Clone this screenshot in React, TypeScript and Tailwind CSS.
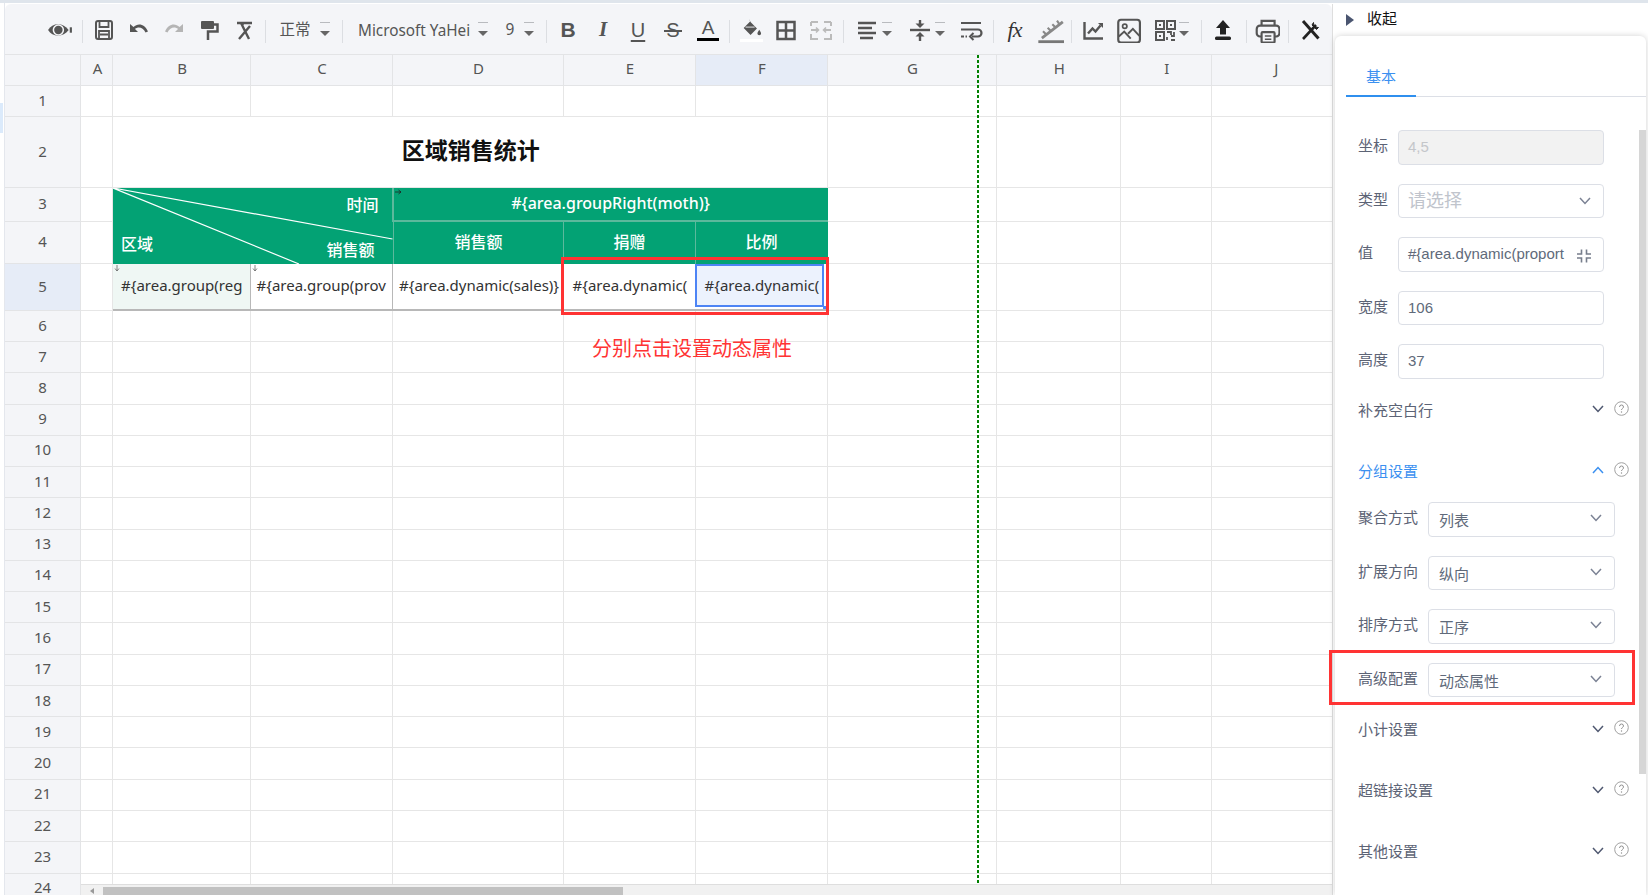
import React from "react";

const colTemplate = "grid-cols-[76px_32px_137.5px_142px_171px_132px_132px_169px_124.5px_90.5px_128.5px]";
const rowTemplate = "grid-rows-[31px_31px_71px_34px_42px_47px_31px_repeat(18,31.27px)]";
const colNames = ["A", "B", "C", "D", "E", "F", "G", "H", "I", "J"];

// generic wrapper for the toolbar drawings
const Ico = ({ children, w = 24, h = 24, box = "0 0 24 24" }: { children: React.ReactNode; w?: number; h?: number; box?: string }) => (
  <svg width={w} height={h} viewBox={box} fill="none">
    {children}
  </svg>
);

const Slot = ({ children, className = "w-[35px]" }: { children: React.ReactNode; className?: string }) => (
  <div className={`${className} shrink-0 flex items-center justify-center`}>{children}</div>
);

const Divider = ({ className = "w-[9px]" }: { className?: string }) => (
  <div className={`${className} shrink-0 flex justify-center mt-[4px]`}>
    <div className="w-px h-[23px] bg-[#dcdee2]" />
  </div>
);

const Caret = ({ className = "" }: { className?: string }) => (
  <div className={`${className} w-[10px] h-[14px] shrink-0 flex flex-col items-center justify-between mt-[-1px]`}>
    <div className="w-[10px] h-px bg-[#b9bbbf]" />
    <div className="w-0 h-0 border-x-[5px] border-x-transparent border-t-[5px] border-t-[#666]" />
  </div>
);

const Toolbar = () => (
  <div className="h-[51px] shrink-0 flex items-center pl-[37.5px] pt-px bg-[#f4f5f8] border-b border-[#e3e4e6] rounded-t-md text-[#555] font-['Noto_Sans','Noto_Sans_CJK_SC',sans-serif]">
    <Slot>
      <Ico w={26} h={26}>
        <path d="M1 12C5 5 15 5 20 12C15 19 5 19 1 12Z" fill="#555" />
        <circle cx="10.5" cy="12" r="4.6" fill="#555" stroke="#f4f5f8" strokeWidth="1.4" />
        <path d="M22 9.5v5" stroke="#555" strokeWidth="2" />
      </Ico>
    </Slot>
    <Divider />
    <Slot>
      <Ico>
        <rect x="4" y="3" width="16" height="18" rx="2" stroke="#555" strokeWidth="2" />
        <path d="M7.5 3.5v5.5h9v-5.5M7 20.5v-7.5h10v7.5M8 16.5h8" stroke="#555" strokeWidth="1.8" />
      </Ico>
    </Slot>
    <Slot>
      <Ico>
        <path d="M3 6v8h8l-3-3c3-2.6 8-2 10.5 3.5l2.5-1C18 6 11 4.5 6.5 9Z" fill="#555" />
      </Ico>
    </Slot>
    <Slot>
      <Ico>
        <path d="M21 6v8h-8l3-3c-3-2.6-8-2-10.5 3.5L3 13.5C6 6 13 4.5 17.5 9Z" fill="#b5b5b5" />
      </Ico>
    </Slot>
    <Slot>
      <Ico>
        <rect x="4" y="3" width="13" height="8" rx="1" fill="#555" />
        <path d="M17 6.5h3.5v7H11V22" stroke="#555" strokeWidth="2.5" />
      </Ico>
    </Slot>
    <Slot>
      <Ico>
        <path d="M5 5h15M11 5l-1 3M9 5l8 16M18 8L7 21" stroke="#555" strokeWidth="2.4" />
      </Ico>
    </Slot>
    <Divider className="w-[8px]" />
    <div className="w-[69px] shrink-0 flex items-center pl-[10px] text-[15.5px]">
      <span className="w-[30px] whitespace-nowrap">正常</span>
      <Caret className="ml-[10px]" />
    </div>
    <Divider className="w-[8px]" />
    <div className="w-[196px] shrink-0 flex items-center pl-[11px] text-[15.5px]">
      <span className="w-[112px] text-[17px] whitespace-nowrap scale-x-[0.9] origin-left">Microsoft YaHei</span>
      <Caret className="ml-[8px]" />
      <span className="ml-[18px] w-[9px]">9</span>
      <Caret className="ml-[9px]" />
    </div>
    <Divider className="w-[8px]" />
    <Slot>
      <span className="text-[21px] font-bold font-['Liberation_Sans',sans-serif]">B</span>
    </Slot>
    <Slot>
      <span className="text-[21px] font-bold italic font-['Liberation_Serif',serif]">I</span>
    </Slot>
    <Slot>
      <span className="text-[20px] underline underline-offset-[3px] decoration-2 font-['Liberation_Sans',sans-serif]">U</span>
    </Slot>
    <Slot>
      <div className="relative flex items-center justify-center w-[20px]">
        <span className="text-[20px] leading-[24px] font-['Liberation_Sans',sans-serif]">S</span>
        <div className="absolute left-[1px] right-[1px] top-[12px] h-[2px] bg-[#555]" />
      </div>
    </Slot>
    <Slot>
      <div className="flex flex-col items-center">
        <span className="text-[19px] leading-[20px] font-['Liberation_Sans',sans-serif]">A</span>
        <div className="w-[22px] h-[3px] bg-black" />
      </div>
    </Slot>
    <Divider className="w-[8px]" />
    <Slot>
      <div className="flex flex-col items-center">
        <Ico w={24} h={22}>
          <path d="M10 2l1.5 3.5 7 7-7 7-7.5-7.5L11 5" fill="#555" />
          <path d="M6 11h10" stroke="#f4f5f8" strokeWidth="1" />
          <path d="M21 14c1.3 2 2 3 2 4a2 2 0 01-4 0c0-1 .7-2 2-4Z" fill="#555" />
        </Ico>
        <div className="w-[23px] h-[3px] bg-white" />
      </div>
    </Slot>
    <Slot>
      <Ico>
        <rect x="3.5" y="4" width="17" height="17" stroke="#555" strokeWidth="2.5" />
        <path d="M12 4v17M3.5 12.5h17" stroke="#555" strokeWidth="2.5" />
      </Ico>
    </Slot>
    <Slot>
      <Ico>
        <path d="M2 4h7M15 4h7M2 4v4M22 4v4M2 16v5h7M22 16v5h-7M2 12h7M22 12h-7" stroke="#bbb" strokeWidth="2" />
        <path d="M7 9.5l2.5 2.5L7 14.5M17 9.5L14.5 12l2.5 2.5" stroke="#bbb" strokeWidth="1.6" />
      </Ico>
    </Slot>
    <Divider className="w-[9px]" />
    <Slot className="w-[24px] ml-[7px]">
      <Ico>
        <path d="M3 5h18M3 10h14M3 15h18M5 20h13" stroke="#555" strokeWidth="2.4" />
      </Ico>
    </Slot>
    <Caret className="ml-[3px]" />
    <Slot className="w-[24px] ml-[16px]">
      <Ico>
        <path d="M2 12h20" stroke="#555" strokeWidth="2.4" />
        <path d="M12 2v4" stroke="#555" strokeWidth="2.4" />
        <path d="M7.5 5.5h9L12 10Z" fill="#555" />
        <path d="M12 18v5" stroke="#555" strokeWidth="2.4" />
        <path d="M7.5 18.5h9L12 14Z" fill="#555" />
      </Ico>
    </Slot>
    <Caret className="ml-[3.5px]" />
    <Slot className="w-[30px] ml-[10.5px]">
      <Ico>
        <path d="M2 5h20M2 11.5h17a3 3 0 010 7h-6" stroke="#555" strokeWidth="2.2" />
        <path d="M14.5 15l-3.5 3.5 3.5 3.5" stroke="#555" strokeWidth="2" />
        <path d="M2 18.5h6" stroke="#555" strokeWidth="2.2" strokeDasharray="3 1.5" />
      </Ico>
    </Slot>
    <Divider className="w-[8px] ml-[3.5px]" />
    <Slot>
      <span className="text-[22px] italic font-['Liberation_Serif',serif] text-[#333] tracking-[-1px]">fx</span>
    </Slot>
    <Slot>
      <Ico w={28} h={28}>
        <path d="M2 22h24" stroke="#777" strokeWidth="2.4" />
        <path d="M5 19L23 5" stroke="#888" strokeWidth="2.4" />
        <path d="M6 13l3 3M10 10l3 3M14 7l3 3M18 4l2 3" stroke="#888" strokeWidth="1.8" />
        <path d="M13 25h2" stroke="#aaa" strokeWidth="1.5" />
      </Ico>
    </Slot>
    <Divider className="w-[8px]" />
    <Slot>
      <Ico>
        <path d="M3.5 4v16.5H22" stroke="#555" strokeWidth="2.4" />
        <path d="M7 15.5l4.5-5 3 3 5-6" stroke="#555" strokeWidth="2.4" />
        <path d="M17 5h5v5Z" fill="#555" />
      </Ico>
    </Slot>
    <Slot>
      <Ico w={26} h={26}>
        <rect x="3" y="2.5" width="20" height="21" rx="2.5" stroke="#555" strokeWidth="2" />
        <circle cx="9" cy="8.5" r="2" stroke="#555" strokeWidth="1.6" />
        <path d="M3.5 18l5-4.5 6 6.5M12 15.5l4.5-4.5 6 6.5" stroke="#555" strokeWidth="1.8" />
      </Ico>
    </Slot>
    <Slot className="w-[24px] ml-[7.5px]">
      <Ico>
        <rect x="3" y="3" width="8" height="8" stroke="#555" strokeWidth="2" />
        <rect x="14" y="3" width="8" height="8" stroke="#555" strokeWidth="2" />
        <rect x="3" y="14" width="8" height="8" stroke="#555" strokeWidth="2" />
        <path d="M6 6h2v2H6zM17 6h2v2h-2zM6 17h2v2H6z" fill="#555" />
        <path d="M14 14h4v3M21 14v4h-3M14 19v3M18 22h4" stroke="#555" strokeWidth="1.8" />
      </Ico>
    </Slot>
    <Caret className="ml-[2px]" />
    <Divider className="w-[8px] ml-[9px]" />
    <Slot>
      <Ico>
        <path d="M12 2l7 8h-4v6.5H9V10H5Z" fill="#222" />
        <rect x="4" y="18.5" width="16" height="3.5" rx="1.5" fill="#222" />
      </Ico>
    </Slot>
    <Divider className="w-[8px] ml-[1.5px]" />
    <Slot className="w-[35px] ml-[-0.5px]">
      <Ico w={26} h={26}>
        <path d="M7 8V3.5h12V8" stroke="#555" strokeWidth="2" />
        <rect x="2.5" y="8" width="21" height="10" rx="3" stroke="#555" strokeWidth="2" />
        <rect x="7" y="14" width="12" height="9.5" rx="1" fill="#f4f5f8" stroke="#555" strokeWidth="2" />
        <path d="M10 17.5h6M10 20.5h6" stroke="#555" strokeWidth="1.5" />
      </Ico>
    </Slot>
    <Divider className="w-[8px]" />
    <Slot>
      <Ico>
        <path d="M5 21L18 7" stroke="#222" strokeWidth="2.6" />
        <path d="M15.5 4.5a4.5 4.5 0 005 5l-2 2-4.5-4.5Z" fill="#222" stroke="#222" strokeWidth="1" />
        <path d="M5 3l15.5 17.5" stroke="#222" strokeWidth="3" />
      </Ico>
    </Slot>
  </div>
);

const TinyArrow = ({ dir, className }: { dir: "down" | "right"; className: string }) => (
  <svg className={`absolute ${className}`} width="6" height="6" viewBox="0 0 6 6" fill="none">
    {dir === "down" ? (
      <path d="M3 0v6M1 3.5L3 6l2-2.5" stroke="#666" strokeWidth="0.8" />
    ) : (
      <path d="M0 3h6M3.5 1L6 3 3.5 5" stroke="#222" strokeWidth="0.8" />
    )}
  </svg>
);

const GREEN = "bg-[#03a274] text-white text-[16px] font-medium flex items-center justify-center pb-[2px]";
const CELL_TEXT = "text-[15px] text-[#333] whitespace-nowrap overflow-hidden";

const cellContent = (name: string) => {
  switch (name) {
    case "B2":
      return (
        <div key={name} className="col-span-5 border-r border-b border-[#e6e6e6] bg-white flex items-center justify-center pl-[2px] pb-[6px] text-[23px] font-bold text-[#111] font-['Noto_Sans_CJK_SC',sans-serif]">
          区域销售统计
        </div>
      );
    case "B3":
      return (
        <div key={name} className="col-span-2 row-span-2 relative bg-[#03a274] text-white text-[16px] font-medium">
          <svg className="absolute inset-0" width="279.5" height="76" viewBox="0 0 279.5 76" fill="none">
            <path d="M0 0L279.5 51M0 0L186 76" stroke="#fff" strokeWidth="1.2" />
          </svg>
          <span className="absolute right-[14px] top-[5px]">时间</span>
          <span className="absolute right-[18px] bottom-[2px]">销售额</span>
          <span className="absolute left-[8px] bottom-[8px]">区域</span>
        </div>
      );
    case "D3":
      return (
        <div key={name} className={`col-span-3 -ml-px relative border-l-2 border-b-2 border-[#5cb99c] ${GREEN} text-[16.25px]`}>
          <TinyArrow dir="right" className="left-[1px] top-[1px]" />
          {"#{area.groupRight(moth)}"}
        </div>
      );
    case "D4":
      return <div key={name} className={`-ml-px border-l-2 border-[#5cb99c] ${GREEN}`}>销售额</div>;
    case "E4":
      return <div key={name} className={`-ml-px border-l border-[#5cb99c] ${GREEN}`}>捐赠</div>;
    case "F4":
      return <div key={name} className={`-ml-px border-l border-[#5cb99c] ${GREEN}`}>比例</div>;
    case "B5":
      return (
        <div key={name} className={`relative bg-[#eff7f4] border-r border-b-2 border-[#b8b8b8] flex items-center pl-[8px] pb-[3px] ${CELL_TEXT}`}>
          <TinyArrow dir="down" className="left-[1px] top-[1px]" />
          {"#{area.group(reg"}
        </div>
      );
    case "C5":
      return (
        <div key={name} className={`relative border-r border-b-2 border-[#b8b8b8] flex items-center pl-[6px] pb-[3px] ${CELL_TEXT}`}>
          <TinyArrow dir="down" className="left-[1px] top-[1px]" />
          {"#{area.group(prov"}
        </div>
      );
    case "D5":
      return (
        <div key={name} className={`border-b-2 border-[#b8b8b8] flex items-center pl-[6.5px] pb-[3px] ${CELL_TEXT}`}>
          {"#{area.dynamic(sales)}"}
        </div>
      );
    case "E5":
      return (
        <div key={name} className={`border-b-2 border-[#b8b8b8] flex items-center pl-[9px] pb-[3px] ${CELL_TEXT}`}>
          {"#{area.dynamic("}
        </div>
      );
    case "F5":
      return (
        <div key={name} className="relative -ml-px border-b-2 border-[#b8b8b8]">
          <div className={`w-[129px] h-[43px] border-2 border-[#4d84f5] bg-[#ecf2fd] flex items-center pl-[8px] ${CELL_TEXT}`}>
            {"#{area.dynamic("}
          </div>
          <div className="absolute left-[128px] top-[42px] w-[3px] h-[3px] bg-[#4d84f5]" />
        </div>
      );
    default:
      return <div key={name} className="border-r border-b border-[#e6e6e6] bg-white" />;
  }
};

// cells swallowed by a merge
const skipped = new Set(["C2", "D2", "E2", "F2", "C3", "E3", "F3", "B4", "C4"]);

const Sheet = () => {
  const cells: React.ReactNode[] = [];
  cells.push(<div key="corner" className="bg-[#f4f5f8] border-r border-b border-[#e3e4e6]" />);
  colNames.forEach((c) =>
    cells.push(
      <div
        key={c}
        className={`${c === "F" ? "bg-[#e6ecf7]" : "bg-[#f4f5f8]"} border-r border-b border-[#e3e4e6] flex items-center justify-center pl-[2px] pb-[3px] text-[15px] text-[#555]`}
      >
        {c}
      </div>
    )
  );
  for (let r = 1; r <= 24; r++) {
    cells.push(
      <div
        key={`r${r}`}
        className={`${r === 5 ? "bg-[#e6ecf7]" : "bg-[#f4f5f8]"} border-r border-b border-[#e3e4e6] flex justify-center text-[15px] leading-[16px] text-[#555] ${r === 24 ? "items-start pt-[5px]" : "items-center pb-[3px]"}`}
      >
        {r}
      </div>
    );
    colNames.forEach((c) => {
      const name = `${c}${r}`;
      if (!skipped.has(name)) cells.push(cellContent(name));
    });
  }
  return (
    <div className="relative flex-1 overflow-hidden font-['Noto_Sans','Noto_Sans_CJK_SC',sans-serif]">
      <div className={`grid ${colTemplate} ${rowTemplate}`}>{cells}</div>

      {/* page break guide */}
      <div className="absolute left-[972px] top-0 h-[829px] w-[2px] bg-[repeating-linear-gradient(to_bottom,#008000_0,#008000_3px,transparent_3px,transparent_5px)]" />

      {/* annotation */}
      <div className="absolute left-[556px] top-[202px] w-[268px] h-[58px] border-[3px] border-[#f33]" />
      <div className="absolute left-[587px] top-[281px] w-[200px] text-center text-[20px] leading-[24px] text-[#f33] font-['Noto_Sans_CJK_SC',sans-serif] whitespace-nowrap">
        分别点击设置动态属性
      </div>

      {/* horizontal scrollbar */}
      <div className="absolute left-[76px] right-0 bottom-0 h-[11px] bg-[#f1f1f1] border-t border-[#dedede] flex items-end">
        <div className="w-[22px] h-full flex items-end justify-center pb-px">
          <div className="w-0 h-0 border-y-[3px] border-y-transparent border-r-[4px] border-r-[#999]" />
        </div>
        <div className="w-[520px] h-[8px] bg-[#c1c1c1]" />
      </div>
    </div>
  );
};

const Chevron = ({ up = false, color = "#7b8294" }: { up?: boolean; color?: string }) => (
  <svg width="12" height="8" viewBox="0 0 12 8" fill="none">
    <path d={up ? "M1 7l5-5.5L11 7" : "M1 1l5 5.5L11 1"} stroke={color} strokeWidth="1.5" />
  </svg>
);

const Help = () => (
  <svg width="15" height="15" viewBox="0 0 15 15" fill="none">
    <circle cx="7.5" cy="7.5" r="6.8" stroke="#a0a0a0" />
    <path d="M5.5 6a2 2 0 114 0c0 1.3-2 1.5-2 3" stroke="#909090" />
    <circle cx="7.5" cy="11" r="0.7" fill="#909090" />
  </svg>
);

const Field = ({ label, children }: { label: string; children: React.ReactNode }) => (
  <div className="flex items-start h-[34.5px]">
    <span className="w-[40px] shrink-0 text-[15px] leading-[32px] text-[#5c6375]">{label}</span>
    {children}
  </div>
);

const InputBox = ({ children, className = "" }: { children?: React.ReactNode; className?: string }) => (
  <div className={`w-[206px] h-full border border-[#dcdfe6] rounded flex items-center pl-[9px] text-[15px] text-[#606a7a] ${className}`}>
    {children}
  </div>
);

const GroupSelect = ({ label, value }: { label: string; value: string }) => (
  <div className="flex items-start h-[34.5px]">
    <span className="w-[70px] shrink-0 text-[15px] leading-[32px] text-[#5c6375]">{label}</span>
    <div className="w-[187px] h-full border border-[#dcdfe6] rounded flex items-center justify-between pl-[10px] pr-[12px] text-[15px] text-[#606a7a]">
      <span className="mt-[4px]">{value}</span>
      <div className="flex -mt-[2px]">
        <Chevron />
      </div>
    </div>
  </div>
);

const Section = ({ label, open = false }: { label: string; open?: boolean }) => (
  <div className="h-[61px] flex items-center shrink-0">
    <span className={`w-[234px] mt-[4px] text-[15px] ${open ? "text-[#3b90f0]" : "text-[#5c6375]"}`}>{label}</span>
    <div className="w-[12px] flex">
      <Chevron up={open} color={open ? "#3b90f0" : "#4f5870"} />
    </div>
    <div className="ml-[10px] flex -mt-[2px]">
      <Help />
    </div>
  </div>
);

const Panel = () => (
  <div className="w-[315px] shrink-0 flex flex-col font-['Liberation_Sans','Noto_Sans_CJK_SC',sans-serif]">
    <div className="h-[33px] shrink-0 flex items-center pl-[13px] text-[15px] text-[#111]">
      <div className="w-0 h-0 border-y-[6.5px] border-y-transparent border-l-[8px] border-l-[#4a5570] mr-[13px]" />
      <span>收起</span>
    </div>
    <div className="relative flex-1 ml-[2px] mr-[2px] bg-white rounded-t-md shadow-[0_0_6px_rgba(0,0,0,0.18)]">
      <div className="mt-[23px] ml-[11px] h-[38px] border-b border-[#dcdfe6] relative">
        <span className="absolute left-[20px] top-[7px] text-[15px] text-[#3b90f0]">基本</span>
        <div className="absolute left-0 bottom-[-1px] w-[70px] h-[2px] bg-[#2f8fee]" />
      </div>

      {/* scrollbar */}
      <div className="absolute right-0 top-[94px] w-[7px] h-[644px] bg-[#d6d6d6]" />

      <div className="mt-[33px] pl-[23px] flex flex-col">
        <div className="flex flex-col gap-[19px]">
          <Field label="坐标">
            <InputBox className="bg-[#f2f2f2] !text-[#c4c6ca]">4,5</InputBox>
          </Field>
          <Field label="类型">
            <InputBox className="justify-between pr-[12px] !text-[18px] !text-[#c0c4cc]">
              <span className="mt-[1px]">请选择</span>
              <Chevron />
            </InputBox>
          </Field>
          <Field label="值">
            <InputBox className="justify-between pr-[11px]">
              <span className="whitespace-nowrap">{"#{area.dynamic(proport"}</span>
              <svg className="mt-[3px]" width="16" height="16" viewBox="0 0 16 16" fill="none">
                <path d="M5.5 1.5v4.5H1M10.5 1.5v4.5H15M5.5 14.5V10H1M10.5 14.5V10H15" stroke="#777e8c" strokeWidth="1.6" />
              </svg>
            </InputBox>
          </Field>
          <Field label="宽度">
            <InputBox>106</InputBox>
          </Field>
          <Field label="高度">
            <InputBox>37</InputBox>
          </Field>
        </div>
        <Section label="补充空白行" />
        <Section label="分组设置" open />
        <div className="h-[1.5px] shrink-0" />
        <div className="flex flex-col gap-[19px]">
          <GroupSelect label="聚合方式" value="列表" />
          <GroupSelect label="扩展方向" value="纵向" />
          <GroupSelect label="排序方式" value="正序" />
          <GroupSelect label="高级配置" value="动态属性" />
        </div>
        <div className="h-px shrink-0" />
        <Section label="小计设置" />
        <Section label="超链接设置" />
        <Section label="其他设置" />
      </div>

      {/* annotation */}
      <div className="absolute left-[-6px] top-[614px] w-[306px] h-[55px] border-[3px] border-[#f33]" />
    </div>
  </div>
);

export default function App() {
  return (
    <div className="w-[1648px] h-[895px] overflow-hidden bg-white flex flex-col">
      <div className="h-[3px] shrink-0 bg-[#dfe5ec]" />
      <div className="flex-1 min-h-0 flex">
        <div className="w-[5px] shrink-0 border-r border-[#e4e7ed] bg-white pt-[100px]">
          <div className="w-[3px] h-[30px] bg-[#dbeafb]" />
        </div>
        <div className="w-[1328px] shrink-0 flex flex-col mt-px border-r border-[#dedede] overflow-hidden">
          <Toolbar />
          <Sheet />
        </div>
        <Panel />
      </div>
    </div>
  );
}
